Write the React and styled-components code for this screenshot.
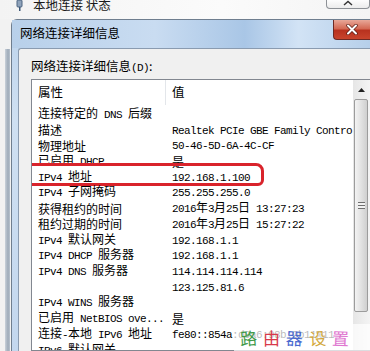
import React from "react";
import styled, { createGlobalStyle } from "styled-components";

const Global = createGlobalStyle`
  html, body { margin: 0; padding: 0; background: #fff; }
  #root { width: 370px; height: 351px; }
`;

const Screen = styled.div`
  position: relative;
  width: 370px;
  height: 351px;
  overflow: hidden;
  display: flex;
  flex-direction: column;
  background: linear-gradient(90deg, #f3f3f3 0%, #fbfbfb 60%, #f4f4f4 100%);
  font-family: "Noto Sans CJK SC", "Noto Sans", sans-serif;
  color: #000;
`;

const ParentBar = styled.div`
  height: 19px;
  flex: none;
  display: flex;
  align-items: flex-start;
  padding-left: 16px;
  gap: 10px;
`;

const ParentTitle = styled.span`
  font-size: 12.5px;
  line-height: 12px;
  margin-top: -1px;
  color: #1a1a1a;
  white-space: pre;
`;

const ParentButton = styled.div`
  margin-left: auto;
  width: 42px;
  height: 8px;
  border: 1px solid #8d9196;
  border-top: none;
  border-radius: 0 0 4px 4px;
  background: linear-gradient(#fdfdfd, #ececec);
  display: flex;
  justify-content: center;
  align-items: flex-start;
`;

const Stage = styled.div`
  flex: 1;
  display: flex;
  min-height: 0;
`;

const LeftStrip = styled.div`
  width: 11px;
  flex: none;
  display: flex;
  padding-top: 30px;
  background: #f2f2f2;
`;

const StripBar = styled.div`
  margin-left: 5px;
  width: 5px;
  background: linear-gradient(90deg, #c9d1da, #9eabb9 60%, #b8c2cd);
`;

const Dialog = styled.div`
  flex: 1;
  display: flex;
  flex-direction: column;
  border-left: 1px solid #6f7e8f;
  border-top: 1px solid #6f7e8f;
  border-radius: 6px 0 0 0;
  background: linear-gradient(180deg, #bcd3ec 0%, #cfe0f2 30%, #c3d7ee 100%);
  min-width: 0;
`;

const TitleBar = styled.div`
  height: 28px;
  flex: none;
  display: flex;
  align-items: flex-start;
  padding-left: 8px;
  background: linear-gradient(90deg, #b8d0ea 0%, #c9dcf1 40%, #a9c6e6 65%, #d2e3f5 80%, #b6cfea 100%);
`;

const Title = styled.span`
  font-size: 12.5px;
  line-height: 14px;
  margin-top: 6px;
`;

const CloseButton = styled.div`
  margin-left: auto;
  width: 36px;
  height: 19px;
  border: 1px solid #6d2a24;
  border-top: none;
  border-right: none;
  border-radius: 0 0 0 4px;
  background: linear-gradient(180deg, #e8a899 0%, #d46a55 45%, #b8321f 55%, #c8442c 100%);
  display: flex;
  justify-content: center;
  align-items: center;
`;

const Frame = styled.div`
  flex: 1;
  display: flex;
  padding-left: 6px;
  min-height: 0;
`;

const Body = styled.div`
  flex: 1;
  display: flex;
  flex-direction: column;
  background: #f0f0f0;
  border-left: 1px solid #8a9bb0;
  border-top: 1px solid #8a9bb0;
  border-radius: 3px 0 0 0;
  padding: 10px 0 0 12px;
  min-width: 0;
`;

const GroupLabel = styled.div`
  font-size: 12.5px;
  line-height: 14px;
  margin-bottom: 4px;
  white-space: pre;
`;

const ListBox = styled.div`
  flex: 1;
  display: flex;
  border: 1px solid #828790;
  border-right: none;
  background: #fff;
  min-height: 0;
`;

const ListContent = styled.div`
  flex: 1;
  overflow: hidden;
  min-width: 0;
`;

const HeaderRow = styled.div`
  height: 26px;
  display: grid;
  grid-template-columns: 134px 1fr;
  font-size: 12.5px;
`;

const HeaderCell = styled.div`
  padding: 5px 0 0 6px;
  line-height: 14px;
  border-right: ${(p) => (p.$sep ? "1px solid #e3e6ea" : "none")};
  height: 20px;
`;

const Row = styled.div`
  position: relative;
  height: 15.73px;
  display: grid;
  grid-template-columns: 134px 1fr;
  align-items: center;
`;

const Cell = styled.div`
  padding-left: 6px;
  white-space: pre;
  overflow: hidden;
  line-height: 15px;
  font-size: 12px;
  font-family: "Noto Sans CJK SC", sans-serif;
`;

const Latin = styled.span`
  font-family: "Liberation Mono", monospace;
  font-size: 11px;
  letter-spacing: -0.6px;
`;

const ScrollBar = styled.div`
  width: 17px;
  flex: none;
  display: flex;
  flex-direction: column;
  background: linear-gradient(90deg, #e6e6e6, #f4f4f4);
`;

const ArrowButton = styled.div`
  height: 19px;
  display: flex;
  justify-content: center;
  align-items: center;
`;

const Thumb = styled.div`
  height: 211px;
  margin: 0 2px 0 1px;
  border: 1px solid #9c9c9c;
  border-radius: 2px;
  background: linear-gradient(90deg, #f3f3f3, #e2e2e2 50%, #cfcfcf);
  display: flex;
  justify-content: center;
  align-items: center;
`;

const Grip = styled.div`
  width: 7px;
  height: 7px;
  background: repeating-linear-gradient(180deg, #6f6f6f 0 1px, #f2f2f2 1px 3px);
`;

/* hand-drawn red marker round the IPv4 row */
const Highlight = styled.div`
  position: absolute;
  box-sizing: border-box;
  left: -7px;
  top: -6px;
  width: 239px;
  height: 23px;
  border: 3.8px solid #d9232b;
  border-radius: 6px 8px 6px 5px;
  pointer-events: none;
`;

const Watermark = styled.div`
  position: absolute;
  right: 0;
  bottom: 0;
  width: 130px;
  height: 27px;
  padding-left: 6px;
  display: flex;
  align-items: center;
  gap: 6px;
  background: rgba(255, 255, 255, 0.72);
  font-family: "Noto Sans CJK SC", sans-serif;
  font-size: 17px;
`;

const MarkChar = styled.span`
  color: ${(p) => p.$color};
  transform: rotate(${(p) => p.$tilt}deg);
`;

const Mixed = ({ text }) =>
  text
    .split(/([\x00-\x7f]+)/)
    .filter(Boolean)
    .map((part, i) =>
      /^[\x00-\x7f]+$/.test(part) ? <Latin key={i}>{part}</Latin> : <span key={i}>{part}</span>
    );

const rows = [
  ["连接特定的 DNS 后缀", ""],
  ["描述", "Realtek PCIe GBE Family Controller"],
  ["物理地址", "50-46-5D-6A-4C-CF"],
  ["已启用 DHCP", "是"],
  ["IPv4 地址", "192.168.1.100", true],
  ["IPv4 子网掩码", "255.255.255.0"],
  ["获得租约的时间", "2016年3月25日 13:27:23"],
  ["租约过期的时间", "2016年3月25日 15:27:22"],
  ["IPv4 默认网关", "192.168.1.1"],
  ["IPv4 DHCP 服务器", "192.168.1.1"],
  ["IPv4 DNS 服务器", "114.114.114.114"],
  ["", "123.125.81.6"],
  ["IPv4 WINS 服务器", ""],
  ["已启用 NetBIOS ove...", "是"],
  ["连接-本地 IPv6 地址", "fe80::854a:d0a6:98b:9b11%11"],
  ["IPv6 默认网关", ""],
];

const mark = [
  ["路", "#3f9a48", -4],
  ["由", "#d83a4a", 0],
  ["器", "#4a6ad0", 3],
  ["设", "#d2a83a", -3],
  ["置", "#e077d0", 2],
];

const NetIcon = () => (
  <svg width="7" height="11" viewBox="0 0 7 11">
    <rect x="1" y="0" width="5" height="7" rx="1" fill="#8fa3bb" stroke="#4c6480" />
    <rect x="3" y="7" width="1.5" height="4" fill="#3d5878" />
  </svg>
);

const App = () => (
  <Screen>
    <Global />
    <ParentBar>
      <NetIcon />
      <ParentTitle>本地连接 状态</ParentTitle>
      <ParentButton>
        <svg width="10" height="6" viewBox="0 0 10 6">
          <path d="M1 5 L5 1.5 L9 5" fill="none" stroke="#333" strokeWidth="1.4" />
        </svg>
      </ParentButton>
    </ParentBar>
    <Stage>
      <LeftStrip>
        <StripBar />
      </LeftStrip>
      <Dialog>
        <TitleBar>
          <Title>网络连接详细信息</Title>
          <CloseButton>
            <svg width="12" height="11" viewBox="0 0 12 11">
              <path d="M2 1.5 L10 9.5 M10 1.5 L2 9.5" stroke="#5a1a12" strokeWidth="3.4" strokeLinecap="round" />
              <path d="M2 1.5 L10 9.5 M10 1.5 L2 9.5" stroke="#fff" strokeWidth="2" strokeLinecap="round" />
            </svg>
          </CloseButton>
        </TitleBar>
        <Frame>
          <Body>
            <GroupLabel>
              网络连接详细信息<Latin>(D)</Latin>:
            </GroupLabel>
            <ListBox>
              <ListContent>
                <HeaderRow>
                  <HeaderCell $sep>属性</HeaderCell>
                  <HeaderCell>值</HeaderCell>
                </HeaderRow>
                {rows.map(([name, value, marked], i) => (
                  <Row key={i}>
                    <Cell>
                      <Mixed text={name} />
                    </Cell>
                    <Cell>
                      <Mixed text={value} />
                    </Cell>
                    {marked && <Highlight />}
                  </Row>
                ))}
              </ListContent>
              <ScrollBar>
                <ArrowButton>
                  <svg width="7" height="4" viewBox="0 0 7 4">
                    <path d="M0 4 L3.5 0 L7 4 Z" fill="#222" />
                  </svg>
                </ArrowButton>
                <Thumb>
                  <Grip />
                </Thumb>
              </ScrollBar>
            </ListBox>
          </Body>
        </Frame>
      </Dialog>
    </Stage>
    <Watermark>
      {mark.map(([ch, color, tilt]) => (
        <MarkChar key={ch} $color={color} $tilt={tilt}>
          {ch}
        </MarkChar>
      ))}
    </Watermark>
  </Screen>
);

export default App;
